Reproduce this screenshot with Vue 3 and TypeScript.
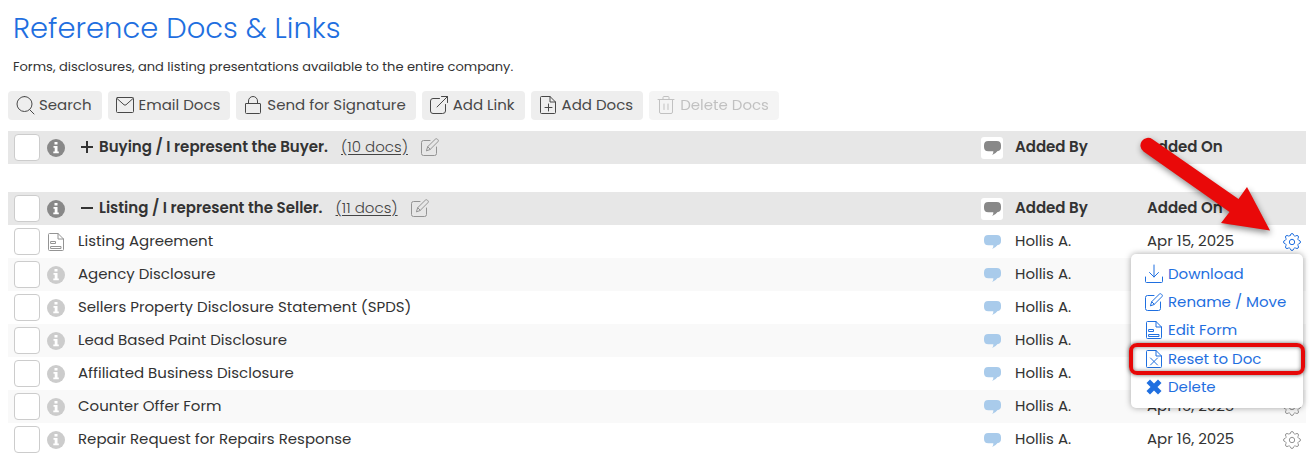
<script setup lang="ts">
import { reactive, ref } from 'vue'

type IconName =
  | 'search' | 'mail' | 'lock' | 'external' | 'addDoc' | 'trash'
  | 'download' | 'edit' | 'form' | 'reset' | 'gear'

const icons: Record<IconName, string> = {
  search: 'M8.500.5a7.500 7.500 0 1 0 0 15a7.500 7.500 0 0 0 0-15M14 14 18 18',
  mail: 'M1.500 1.500H16.500Q17.500 1.500 17.500 2.500V15.500Q17.500 16.500 16.500 16.500H1.500Q.5 16.500.5 15.500V2.500Q.5 1.500 1.500 1.500M1 2.500 8 8.800Q9 9.500 10 8.800L17 2.500',
  lock: 'M2 7.500H16Q16.500 7.500 16.500 8V16.500Q16.500 17.500 15.500 17.500H2.500Q1.500 17.500 1.500 16.500V8Q1.500 7.500 2 7.500M4.500 7.500V5a4.500 4.500 0 0 1 9 0V7.500',
  external: 'M9.500 2.500H3Q.5 2.500.5 5V15Q.5 17.500 3 17.500H12.500Q15.500 17.500 15.500 15V8.500M7 11 17.500.5M11.500.5H17.500V6.500',
  addDoc: 'M11 .5H2.500Q1.500.5 1.500 1.500V16.500Q1.500 17.500 2.500 17.500H15.500Q16.500 17.500 16.500 16.500V6L11 .5V6H16.500M9.500 8V15M6 11.500H13',
  trash: 'M1 3.500H17M6 3.500V1.500Q6 .5 7 .5H11Q12 .5 12 1.500V3.500M2.500 3.500V16Q2.500 17.500 4 17.500H14Q15.500 17.500 15.500 16V3.500M7 8V13.500M11 8V13.500',
  download: 'M9 0V12M4.500 7.500 9 12 13.500 7.500M.5 12V16.500Q.5 17.500 1.500 17.500H16.500Q17.500 17.500 17.500 16.500V12',
  edit: 'M9 2.500H2.500Q.5 2.500.5 4.500V15.500Q.5 17.500 2.500 17.500H13.500Q15.500 17.500 15.500 15.500V9M5.500 12.500 6.700 8.700 14.300 1.200Q15.300.2 16.400 1.200L16.900 1.700Q17.900 2.700 16.900 3.700L9.300 11.300ZM6.700 8.700 9.300 11.300',
  form: 'M11 .5H2.500Q1.500.5 1.500 1.500V16.500Q1.500 17.500 2.500 17.500H15.500Q16.500 17.500 16.500 16.500V6L11 .5V6H16.500M4 8.500H8.500V10.500H4ZM4 13.500H14V15.500H4Z',
  reset: 'M11 .5H2.500Q1.500.5 1.500 1.500V16.500Q1.500 17.500 2.500 17.500H15.500Q16.500 17.500 16.500 16.500V6L11 .5V6H16.500M5.500 8 12.500 15M12.500 8 5.500 15',
  gear: 'M7.300 2.300Q7.600.5 9 .5T10.700 2.300Q11.100 3.200 12.500 3Q14.200 1.900 15.100 2.900T15 5.500Q14.700 6.800 15.700 7.300Q17.500 7.600 17.500 9T15.700 10.700Q14.700 11.200 15 12.500Q16.100 14.200 15.100 15.100T12.500 15Q11.200 14.700 10.700 15.700Q10.400 17.500 9 17.500T7.300 15.700Q6.800 14.700 5.500 15Q3.800 16.100 2.900 15.100T3 12.500Q3.300 11.200 2.300 10.700Q.5 10.400.5 9T2.300 7.300Q3.300 6.800 3 5.500Q1.900 3.800 2.900 2.900T5.500 3Q6.800 3.300 7.300 2.300M9 6.300a2.700 2.700 0 1 0 0 5.400a2.700 2.700 0 0 0 0-5.400',
}

const tools: { label: string; icon: IconName; disabled?: boolean }[] = [
  { label: 'Search', icon: 'search' },
  { label: 'Email Docs', icon: 'mail' },
  { label: 'Send for Signature', icon: 'lock' },
  { label: 'Add Link', icon: 'external' },
  { label: 'Add Docs', icon: 'addDoc' },
  { label: 'Delete Docs', icon: 'trash', disabled: true },
]

interface Doc { name: string; by: string; on: string; form?: boolean }
const doc = (name: string, on: string, form = false): Doc => ({ name, by: 'Hollis A.', on, form })

const groups = reactive<{ title: string; count: number; open: boolean; docs: Doc[] }[]>([
  { title: 'Buying / I represent the Buyer.', count: 10, open: false, docs: [] },
  {
    title: 'Listing / I represent the Seller.',
    count: 11,
    open: true,
    docs: [
      doc('Listing Agreement', 'Apr 15, 2025', true),
      doc('Agency Disclosure', 'Apr 15, 2025'),
      doc('Sellers Property Disclosure Statement (SPDS)', 'Apr 15, 2025'),
      doc('Lead Based Paint Disclosure', 'Apr 15, 2025'),
      doc('Affiliated Business Disclosure', 'Apr 15, 2025'),
      doc('Counter Offer Form', 'Apr 16, 2025'),
      doc('Repair Request for Repairs Response', 'Apr 16, 2025'),
    ],
  },
])

const menu: { label: string; icon: IconName | 'cross'; marked?: boolean }[] = [
  { label: 'Download', icon: 'download' },
  { label: 'Rename / Move', icon: 'edit' },
  { label: 'Edit Form', icon: 'form' },
  { label: 'Reset to Doc', icon: 'reset', marked: true },
  { label: 'Delete', icon: 'cross' },
]

const openMenu = ref('Listing Agreement')
const toggleMenu = (name: string) => {
  openMenu.value = openMenu.value === name ? '' : name
}
</script>

<template>
  <main class="page">
    <h1>Reference Docs &amp; Links</h1>
    <p class="intro">Forms, disclosures, and listing presentations available to the entire company.</p>

    <div class="toolbar">
      <button v-for="t in tools" :key="t.label" type="button" class="tool" :disabled="t.disabled">
        <svg class="icon" viewBox="0 0 18 18" aria-hidden="true"><path :d="icons[t.icon]" /></svg>
        <span>{{ t.label }}</span>
      </button>
    </div>

    <table v-for="g in groups" :key="g.title" class="docs">
      <colgroup>
        <col class="c-check" /><col class="c-kind" /><col /><col class="c-chat" />
        <col class="c-by" /><col class="c-on" /><col class="c-gear" />
      </colgroup>
      <thead>
        <tr>
          <th class="check"><input type="checkbox" :aria-label="`Select all in ${g.title}`" /></th>
          <th>
            <svg class="info" viewBox="0 0 18 18" aria-hidden="true">
              <circle cx="9" cy="9" r="9" />
              <path d="M7.500 3h3v2.600h-3zM6.500 7h4v5.500h1.300V14.300H6.300V12.500h1.400V8.700H6.500z" />
            </svg>
          </th>
          <th scope="col">
            <div class="group">
              <button type="button" class="toggle" :aria-expanded="g.open" @click="g.open = !g.open">
                <svg class="sign" viewBox="0 0 12 12" aria-hidden="true">
                  <path :d="g.open ? 'M0 6H12' : 'M0 6H12M6 0V12'" />
                </svg>
                <span>{{ g.title }}</span>
              </button>
              <a href="#" class="count">({{ g.count }} docs)</a>
              <button type="button" class="plain" :aria-label="`Edit ${g.title}`">
                <svg class="icon grey" viewBox="0 0 18 18" aria-hidden="true"><path :d="icons.edit" /></svg>
              </button>
            </div>
          </th>
          <th>
            <button type="button" class="chat-all" aria-label="Comments">
              <svg class="bubble" viewBox="0 0 16 13" aria-hidden="true">
                <path d="M4 0H12Q16 0 16 4V5.500Q16 9 12.800 9.300Q11 11.800 7.700 13Q9 11.300 8.800 9.500H4Q0 9.500 0 5.500V4Q0 0 4 0" />
              </svg>
            </button>
          </th>
          <th scope="col" class="text">Added By</th>
          <th scope="col" class="text">Added On</th>
          <th></th>
        </tr>
      </thead>
      <tbody v-if="g.open">
        <tr v-for="d in g.docs" :key="d.name">
          <td class="check"><input type="checkbox" :aria-label="`Select ${d.name}`" /></td>
          <td>
            <svg v-if="d.form" class="icon grey" viewBox="0 0 18 18" aria-hidden="true"><path :d="icons.form" /></svg>
            <svg v-else class="info" viewBox="0 0 18 18" aria-hidden="true">
              <circle cx="9" cy="9" r="9" />
              <path d="M7.500 3h3v2.600h-3zM6.500 7h4v5.500h1.300V14.300H6.300V12.500h1.400V8.700H6.500z" />
            </svg>
          </td>
          <td class="name">{{ d.name }}</td>
          <td>
            <button type="button" class="plain" :aria-label="`Comments on ${d.name}`">
              <svg class="bubble" viewBox="0 0 16 13" aria-hidden="true">
                <path d="M4 0H12Q16 0 16 4V5.500Q16 9 12.800 9.300Q11 11.800 7.700 13Q9 11.300 8.800 9.500H4Q0 9.500 0 5.500V4Q0 0 4 0" />
              </svg>
            </button>
          </td>
          <td class="text">{{ d.by }}</td>
          <td class="text">{{ d.on }}</td>
          <td class="actions">
            <button
              type="button"
              class="plain gear"
              :class="{ active: openMenu === d.name }"
              :aria-label="`Actions for ${d.name}`"
              @click="toggleMenu(d.name)"
            >
              <svg class="icon" viewBox="0 0 18 18" aria-hidden="true"><path :d="icons.gear" /></svg>
            </button>
            <template v-if="openMenu === d.name">
              <ul class="menu">
                <li v-for="m in menu" :key="m.label" :class="{ marked: m.marked }">
                  <button type="button">
                    <svg v-if="m.icon === 'cross'" class="cross" viewBox="0 0 18 18" aria-hidden="true">
                      <path d="M5 1.500 9 5.500 13 1.500 16.500 5 12.500 9 16.500 13 13 16.500 9 12.500 5 16.500 1.500 13 5.500 9 1.500 5Z" />
                    </svg>
                    <svg v-else class="icon" viewBox="0 0 18 18" aria-hidden="true"><path :d="icons[m.icon]" /></svg>
                    <span>{{ m.label }}</span>
                  </button>
                </li>
              </ul>
              <svg class="arrow" viewBox="0 0 150 110" aria-hidden="true">
                <path d="M22.500 9.300 108.500 69 117 57 140 100.500 91 93 99.500 82 13.500 21.500A7.500 7.500 0 0 1 22.500 9.300Z" />
              </svg>
            </template>
          </td>
        </tr>
      </tbody>
    </table>
  </main>
</template>

<style>
body {
  background: #fff;
}
</style>

<style scoped>
.page {
  padding: 8px 9px 0 8px;
  font: 400 15px/24px Poppins, Inter, "Liberation Sans", sans-serif;
  color: #333;
}
h1 {
  margin: 0 5px;
  font-size: 29px;
  line-height: 40px;
  font-weight: 300;
  color: #1f6fe0;
}
.intro {
  margin: 8px 5px 14px;
  font-size: 13px;
  line-height: 21px;
}
button {
  font: inherit;
  color: inherit;
  border: 0;
  background: none;
  padding: 0;
  cursor: pointer;
}
.toolbar {
  display: flex;
  flex-wrap: wrap;
  gap: 6px;
  margin-bottom: 11px;
}
.tool {
  display: flex;
  align-items: center;
  gap: 5px;
  height: 29px;
  padding: 0 10px 2px 8px;
  border-radius: 4px;
  background: #eee;
  color: #484848;
  white-space: nowrap;
}
.tool:disabled {
  opacity: .6;
  color: #999;
  cursor: default;
}
.icon {
  display: block;
  flex: none;
  width: 18px;
  height: 18px;
  overflow: visible;
  fill: none;
  stroke: currentColor;
  stroke-width: 1;
  stroke-linecap: round;
  stroke-linejoin: round;
}
.grey {
  color: #949494;
}
.docs {
  width: 100%;
  table-layout: fixed;
  border-collapse: collapse;
  margin-bottom: 28px;
}
.docs:last-child {
  margin-bottom: 0;
}
.c-check { width: 39px; }
.c-kind { width: 31px; }
.c-chat { width: 34px; }
.c-by { width: 132px; }
.c-on { width: 133px; }
.c-gear { width: 32px; }
th, td {
  box-sizing: border-box;
  height: 33px;
  padding: 0;
  text-align: left;
  vertical-align: middle;
}
th {
  font-weight: 600;
}
thead tr {
  background: #e7e7e7;
}
tbody tr:nth-child(even) {
  background: #f9f9f9;
}
.check {
  padding-left: 6px;
}
input {
  display: block;
  appearance: none;
  box-sizing: border-box;
  width: 26px;
  height: 27px;
  margin: 0;
  border: 1px solid #ccc;
  border-radius: 4px;
  background: #fff;
}
input:checked {
  background: #1f6fe0;
}
.info {
  display: block;
  width: 18px;
  height: 18px;
  fill: #ccc;
}
.info path {
  fill: #fff;
}
thead .info {
  fill: #888;
}
.group {
  display: flex;
  align-items: center;
  gap: 13px;
  padding: 0 0 2px 3px;
  white-space: nowrap;
}
.toggle {
  display: flex;
  align-items: center;
  gap: 6px;
}
.sign {
  width: 12px;
  height: 12px;
  fill: none;
  stroke: #333;
  stroke-width: 2;
}
.count {
  font-weight: 300;
  color: #444;
  text-underline-offset: 2px;
}
.plain {
  display: block;
}
.bubble {
  display: block;
  width: 17px;
  height: 14px;
  margin-left: 9px;
  fill: #a9cbeb;
}
.chat-all {
  display: flex;
  align-items: center;
  justify-content: center;
  width: 22px;
  height: 22px;
  margin-left: 6px;
  border-radius: 3px;
  background: #fff;
}
.chat-all .bubble {
  margin: 0;
  fill: #888;
}
.name {
  padding-bottom: 2px;
}
.text {
  padding: 0 0 2px 6px;
}
.actions {
  position: relative;
}
.gear {
  margin-left: 9px;
  color: #949494;
}
.gear.active {
  color: #1f6fe0;
}
.menu {
  position: absolute;
  z-index: 1;
  top: 29px;
  right: 3px;
  width: 172px;
  box-sizing: border-box;
  margin: 0;
  padding: 6px 0 7px;
  list-style: none;
  border-radius: 5px;
  background: #fff;
  box-shadow: 0 0 6px rgba(0, 0, 0, .35);
  color: #1f6fe0;
}
.menu li {
  position: relative;
}
.menu button {
  display: flex;
  align-items: center;
  gap: 5px;
  width: 100%;
  height: 28px;
  padding-left: 14px;
  white-space: nowrap;
}
.menu .marked {
  margin-top: 1px;
}
.marked::after {
  content: "";
  position: absolute;
  inset: -2px;
  border: 4px solid #e60808;
  border-radius: 8px;
  box-shadow: 0 0 4px rgba(0, 0, 0, .6), inset 0 0 4px rgba(0, 0, 0, .5);
  pointer-events: none;
}
.cross {
  width: 18px;
  height: 18px;
  fill: currentColor;
}
.arrow {
  position: absolute;
  top: -95px;
  right: 26px;
  width: 150px;
  height: 110px;
  fill: #e90909;
  filter: drop-shadow(1px 3px 3px rgba(0, 0, 0, .45));
  pointer-events: none;
}
</style>
